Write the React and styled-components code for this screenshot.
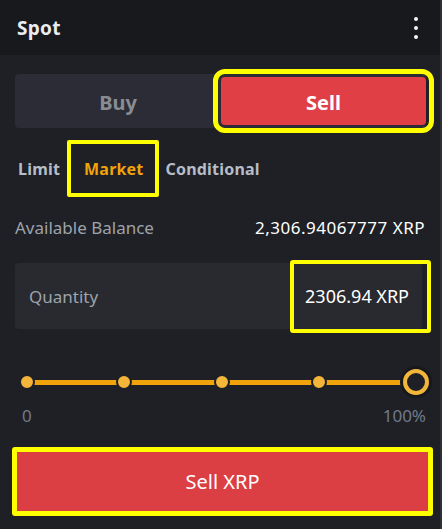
import React from 'react';
import styled, { createGlobalStyle } from 'styled-components';

const GlobalStyle = createGlobalStyle`
  html, body {
    margin: 0;
    padding: 0;
    background: #1e2026;
  }
  * { box-sizing: border-box; }
`;

const Panel = styled.div`
  width: 442px;
  height: 529px;
  background: #1e2026;
  border-right: 2px solid #2e3036;
  font-family: "Noto Sans", "Open Sans", sans-serif;
  color: #eaecef;
  overflow: hidden;
`;

const Header = styled.div`
  height: 55px;
  background: #18191d;
  display: flex;
  align-items: center;
  justify-content: space-between;
  padding: 0 22px 0 17px;
`;

const Title = styled.div`
  font-size: 19px;
  font-weight: 700;
  color: #eaecef;
  letter-spacing: 0.3px;
`;

const Kebab = styled.div`
  display: flex;
  flex-direction: column;
  gap: 5px;
  & > span {
    width: 4px;
    height: 4px;
    border-radius: 50%;
    background: #f5f5f5;
  }
`;

const Body = styled.div`
  padding: 19px 15px 0 15px;
`;

const SideSwitch = styled.div`
  display: grid;
  grid-template-columns: 1fr 205px;
  height: 54px;
  background: #2b2c35;
  border-radius: 4px;
  padding: 3px 0 3px 0;
  margin-right: -1px;
`;

const SideButton = styled.div`
  display: flex;
  align-items: center;
  justify-content: center;
  font-size: 20px;
  font-weight: 700;
  border-radius: 4px;
  padding-top: 2px;
  color: ${p => (p.$active ? '#ffffff' : '#8a8c93')};
  background: ${p => (p.$active ? '#e04045' : 'transparent')};
  ${p => p.$marked && `
    outline: 5px solid #ffff00;
    outline-offset: 3px;
  `}
`;

const Tabs = styled.div`
  display: flex;
  align-items: stretch;
  gap: 7px;
  height: 57px;
  margin-top: 12px;
  padding-left: 3px;
`;

const Tab = styled.div`
  display: flex;
  align-items: center;
  font-size: 16px;
  font-weight: 700;
  letter-spacing: 0.2px;
  color: ${p => (p.$active ? '#f0a30a' : '#b7bdc6')};
  ${p => p.$marked && `
    border: 4px solid #ffff00;
    border-radius: 2px;
    padding: 0 11px 0 13px;
  `}
`;

const BalanceRow = styled.div`
  display: flex;
  justify-content: space-between;
  align-items: center;
  height: 60px;
  font-size: 17px;
`;

const Label = styled.span`
  color: #9ea3ab;
  font-size: 17px;
`;

const Value = styled.span`
  color: #ffffff;
  font-size: 17px;
  letter-spacing: 0.5px;
`;

const QuantityField = styled.div`
  display: flex;
  justify-content: space-between;
  align-items: center;
  height: 66px;
  margin-top: 6px;
  background: #292a30;
  border-radius: 4px;
  padding-left: 14px;
  margin-right: 3px;
`;

const QuantityValue = styled.div`
  display: flex;
  align-items: center;
  align-self: center;
  height: 73px;
  margin-right: -9px;
  padding: 0 18px 0 11px;
  border: 4px solid #ffff00;
  border-radius: 3px;
  font-size: 18px;
  color: #ffffff;
`;

const SliderWrap = styled.div`
  margin-top: 38px;
`;

const Track = styled.div`
  position: relative;
  display: flex;
  justify-content: space-between;
  align-items: center;
  height: 30px;
  margin: 0 9px 0 12px;
  &::before {
    content: '';
    position: absolute;
    left: 0;
    right: 0;
    top: 50%;
    height: 5px;
    margin-top: -2px;
    background: #f0a30a;
  }
`;

const Stop = styled.div`
  position: relative;
  width: 0;
  display: flex;
  justify-content: center;
  align-items: center;
`;

const Dot = styled.span`
  flex: none;
  width: 16px;
  height: 16px;
  border-radius: 50%;
  background: #f3b53a;
  border: 2px solid #1e2026;
`;

const Thumb = styled.span`
  flex: none;
  width: 32px;
  height: 32px;
  border-radius: 50%;
  background: #17181c;
  display: flex;
  align-items: center;
  justify-content: center;
  &::after {
    content: '';
    width: 26px;
    height: 26px;
    border-radius: 50%;
    border: 4px solid #f3b53a;
    background: #1e2026;
    box-sizing: border-box;
  }
`;

const Marks = styled.div`
  display: flex;
  justify-content: space-between;
  margin: 7px -1px 0 0;
  padding-left: 7px;
  font-size: 17px;
  color: #707a8a;
`;

const ActionWrap = styled.div`
  margin: 20px 0 0 -3px;
  width: 421px;
  height: 69px;
  border: 5px solid #ffff00;
  border-radius: 3px;
`;

const ActionButton = styled.div`
  height: 100%;
  display: flex;
  align-items: center;
  justify-content: center;
  background: #db3e43;
  font-size: 20px;
  color: #ffffff;
`;

const stops = [0, 25, 50, 75];

export default function App() {
  return (
    <>
      <GlobalStyle />
      <Panel>
        <Header>
          <Title>Spot</Title>
          <Kebab>
            <span />
            <span />
            <span />
          </Kebab>
        </Header>
        <Body>
          <SideSwitch>
            <SideButton>Buy</SideButton>
            <SideButton $active $marked>Sell</SideButton>
          </SideSwitch>
          <Tabs>
            <Tab>Limit</Tab>
            <Tab $active $marked>Market</Tab>
            <Tab>Conditional</Tab>
          </Tabs>
          <BalanceRow>
            <Label>Available Balance</Label>
            <Value>2,306.94067777 XRP</Value>
          </BalanceRow>
          <QuantityField>
            <Label>Quantity</Label>
            <QuantityValue>2306.94 XRP</QuantityValue>
          </QuantityField>
          <SliderWrap>
            <Track>
              {stops.map(s => (
                <Stop key={s}>
                  <Dot />
                </Stop>
              ))}
              <Stop>
                <Thumb />
              </Stop>
            </Track>
            <Marks>
              <span>0</span>
              <span>100%</span>
            </Marks>
          </SliderWrap>
          <ActionWrap>
            <ActionButton>Sell XRP</ActionButton>
          </ActionWrap>
        </Body>
      </Panel>
    </>
  );
}
